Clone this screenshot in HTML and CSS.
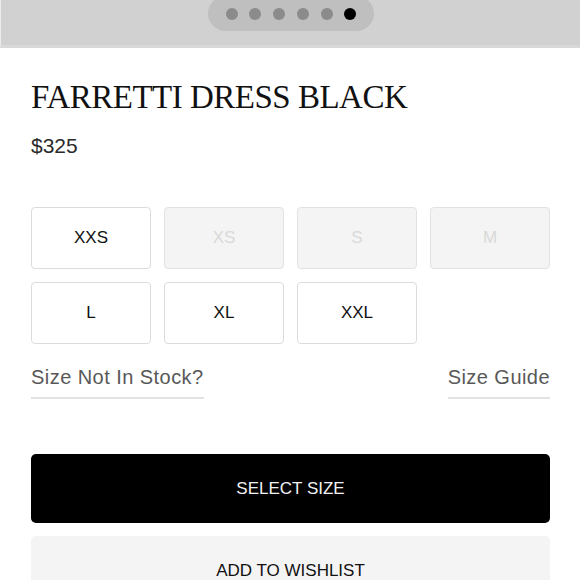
FILE: index.html
```html
<!DOCTYPE html>
<html lang="en">
<head>
<meta charset="utf-8">
<title>Farretti Dress Black</title>
<link rel="stylesheet" href="styles.css">
</head>
<body>
  <div class="gallery">
    <div class="pager">
      <span class="dot"></span>
      <span class="dot"></span>
      <span class="dot"></span>
      <span class="dot"></span>
      <span class="dot"></span>
      <span class="dot active"></span>
    </div>
  </div>
  <main class="product">
    <h1 class="title">FARRETTI DRESS BLACK</h1>
    <div class="price">$325</div>
    <div class="sizes">
      <button class="size">XXS</button>
      <button class="size disabled">XS</button>
      <button class="size disabled">S</button>
      <button class="size disabled">M</button>
      <button class="size">L</button>
      <button class="size">XL</button>
      <button class="size">XXL</button>
    </div>
    <div class="links">
      <a class="link">Size Not In Stock?</a>
      <a class="link">Size Guide</a>
    </div>
    <button class="btn btn-primary">SELECT SIZE</button>
    <button class="btn btn-secondary">ADD TO WISHLIST</button>
  </main>
</body>
</html>
```
FILE: styles.css
```css
html, body {
  margin: 0;
  padding: 0;
  background: #ffffff;
}
body {
  font-family: "Liberation Sans", Arial, sans-serif;
  color: #111;
  overflow: hidden;
}
.gallery {
  height: 45px;
  background: #d1d1d1;
  border-bottom: 3px solid #d8d8d8;
  border-left: 1px solid #ececec;
  display: flex;
  justify-content: center;
  align-items: flex-start;
}
.pager {
  margin-top: -4px;
  margin-left: 1px;
  height: 35px;
  width: 166px;
  box-sizing: border-box;
  border-radius: 18px;
  background: #bfbfbf;
  display: flex;
  align-items: center;
  justify-content: center;
  gap: 11.8px;
}
.dot {
  width: 12px;
  height: 12px;
  border-radius: 50%;
  background: #8b8b8b;
}
.dot.active {
  background: #000;
}
.product {
  padding: 0 30px 0 31px;
  display: flex;
  flex-direction: column;
}
.title {
  margin: 29px 0 0 0;
  font-family: "Liberation Serif", "Times New Roman", serif;
  font-weight: normal;
  font-size: 33px;
  line-height: 40px;
  letter-spacing: -0.5px;
  color: #111;
}
.price {
  margin-top: 17px;
  font-size: 21px;
  line-height: 24px;
  color: #2a2a2a;
}
.sizes {
  margin-top: 49px;
  display: grid;
  grid-template-columns: repeat(4, 120px);
  grid-auto-rows: 62px;
  gap: 13px;
}
.size {
  box-sizing: border-box;
  border: 1.5px solid #dcdcdc;
  border-radius: 4px;
  background: #fff;
  font-family: "Liberation Sans", Arial, sans-serif;
  font-size: 17px;
  color: #111;
  padding: 0;
  margin: 0;
}
.size.disabled {
  background: #f4f4f4;
  color: #d9d9d9;
  border-color: #e2e2e2;
}
.links {
  margin-top: 21px;
  display: flex;
  justify-content: space-between;
}
.link {
  font-size: 20px;
  line-height: 24px;
  letter-spacing: 0.45px;
  color: #585858;
  padding-bottom: 8px;
  border-bottom: 2px solid #e2e2e2;
}
.btn {
  box-sizing: border-box;
  width: 519px;
  height: 69px;
  border: none;
  border-radius: 5px;
  font-family: "Liberation Sans", Arial, sans-serif;
  font-size: 17px;
  padding: 0;
  margin: 0;
  display: flex;
  align-items: center;
  justify-content: center;
}
.btn-primary {
  margin-top: 55px;
  background: #000;
  color: #f2f2f2;
}
.btn-secondary {
  margin-top: 13px;
  background: #f4f4f4;
  color: #111;
}
```
